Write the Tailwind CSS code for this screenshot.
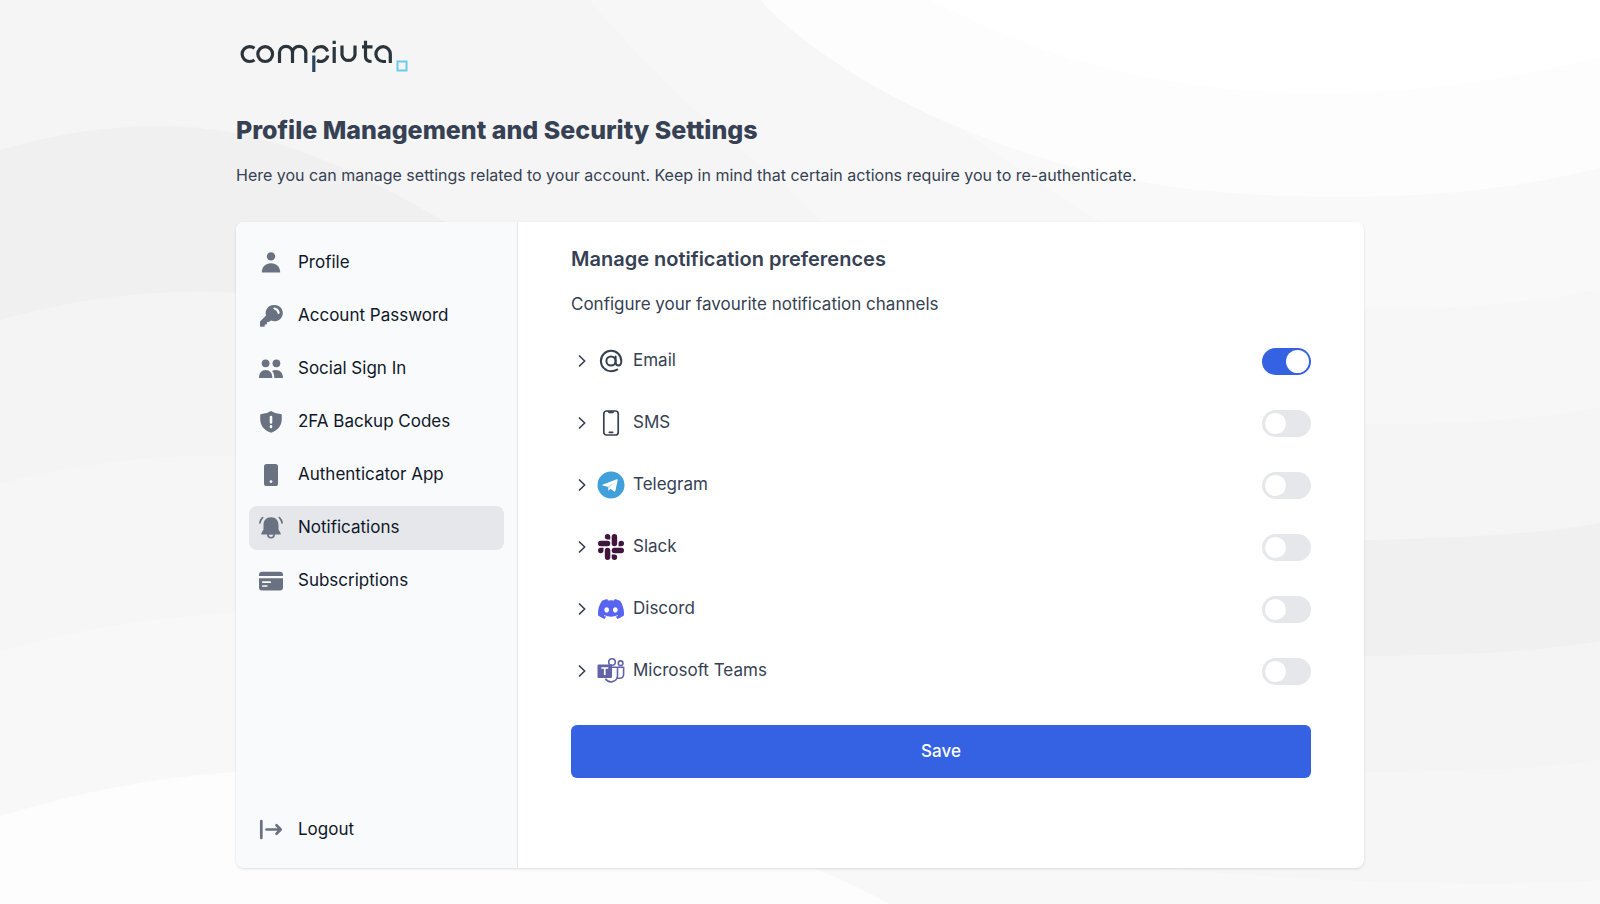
<!DOCTYPE html>
<html lang="en">
<head>
<meta charset="utf-8">
<meta name="viewport" content="width=device-width, initial-scale=1">
<title>Profile Management and Security Settings</title>
<script src="https://cdn.jsdelivr.net/npm/@tailwindcss/browser@4"></script>
</head>
<body class="relative min-h-screen overflow-x-hidden font-['Inter',sans-serif] text-[17px] text-gray-700">
<svg class="absolute inset-0 -z-10 h-full w-full" viewBox="0 0 1600 904" preserveAspectRatio="none" aria-hidden="true">
  <rect width="1600" height="904" fill="#fff"/>
  <path d="M930 0C990 30 1060 60 1140 76C1280 104 1440 98 1600 57V904H0V0Z" fill="#fdfdfd"/>
  <path d="M760 0C800 45 880 95 960 128C1080 178 1180 196 1340 197C1440 197 1520 188 1600 168V904H0V0Z" fill="#f9f9f9"/>
  <path d="M760 0C800 45 880 95 960 128C1060 200 1200 300 1375 308C1460 308 1540 304 1600 288V904H0V0Z" fill="#f7f7f7"/>
  <path d="M590 0C640 60 700 120 780 180C900 320 1200 425 1375 424C1460 424 1540 420 1600 407V904H0V0Z" fill="#f5f5f5"/>
  <path d="M0 150C90 124 170 120 240 134C400 168 560 300 700 400C900 500 1200 544 1375 540C1460 538 1540 534 1600 523V904H0Z" fill="#f0f0f0"/>
  <path d="M0 320C80 297 160 288 240 293C600 330 900 655 1375 656C1460 655 1540 652 1600 641V904H0Z" fill="#f4f4f4"/>
  <path d="M0 484C80 462 160 454 240 456C600 480 900 770 1375 772C1460 771 1540 770 1600 760V904H0Z" fill="#f6f6f6"/>
  <path d="M0 652C80 628 160 616 240 613C500 620 800 830 1000 850C1200 880 1500 890 1600 880V904H0Z" fill="#f8f8f8"/>
  <path d="M0 816C80 792 160 776 240 772C500 780 720 812 890 904H0Z" fill="#fdfdfd"/>
</svg>

<div class="mx-auto flex w-full max-w-[1128px] flex-col">
  <header>
    <a href="#" aria-label="compiuta" class="mt-9 block w-fit">
      <svg class="block h-10 w-44" viewBox="0 0 176 40" fill="none" stroke="#2b343b" stroke-width="3.2" aria-hidden="true">
        <path d="M18.500 12.200Q16.500 10.700 13.500 10.700A7.400 7.400 0 0 0 13.500 25.500Q16.500 25.500 18.500 24"/>
        <circle cx="29.200" cy="18.100" r="7.400"/>
        <path d="M43.500 27V16.500A6.200 5.800 0 0 1 56.500 16.500V27M56.500 16.500A6.200 5.800 0 0 1 69.800 16.500V27"/>
        <path d="M77.800 36V19.500" stroke="#26465f"/>
        <path d="M77.500 16.500A7.300 7.300 0 0 1 91.500 15.500M91.800 19.500A7.300 7.300 0 0 1 81 24.500"/>
        <path d="M98.200 11V27M98.200 4.800V8"/>
        <path d="M106 9.500V19A6.600 6.600 0 0 0 119 19V9.500"/>
        <path d="M129.500 4.800V20.500Q129.500 25.500 135.500 25.500M126 10.800H136.500"/>
        <path d="M154.300 27V18.100A7.200 7.400 0 1 0 147 25.500H150"/>
        <rect x="161.500" y="25.500" width="9" height="9" stroke="#6ccbec" stroke-width="2"/>
      </svg>
    </a>
    <h1 class="mt-9 text-[25px] leading-9 font-extrabold">Profile Management and Security Settings</h1>
    <p class="mt-[13px] text-base leading-7">Here you can manage settings related to your account. Keep in mind that certain actions require you to re-authenticate.</p>
  </header>

  <div class="mt-[33px] mb-8 flex min-h-[646px] overflow-hidden rounded-lg bg-white shadow">
    <nav aria-label="Account settings" class="flex w-[282px] shrink-0 flex-col justify-between border-r border-gray-200 bg-[#f9fafc] px-[13px] pt-[19px] pb-4 text-gray-900">
      <ul class="flex flex-col gap-[9px]">
        <li><a href="#" class="flex h-11 items-center gap-[15px] rounded-lg px-[10px]">
          <svg class="size-6 text-gray-500" viewBox="0 0 24 24" fill="currentColor" aria-hidden="true"><circle cx="12" cy="5.400" r="4.200"/><path d="M2.800 21.500C2.800 15.700 6.500 12.200 12 12.200S21.200 15.700 21.200 21.500Z"/></svg>
          Profile</a></li>
        <li><a href="#" class="flex h-11 items-center gap-[15px] rounded-lg px-[10px]">
          <svg class="size-6 text-gray-500" viewBox="0 0 24 24" aria-hidden="true"><path fill="currentColor" d="M14.800 1A8.100 8.100 0 0 0 7 11.500L1.500 17Q1 17.500 1 18.200V22Q1 22.800 1.800 22.800H5Q5.800 22.800 5.800 22V20.500H7.200Q8 20.500 8 19.700V18H9.600L12.300 16.400A8.100 8.100 0 1 0 14.800 1Z"/><path d="M15.500 4.500Q19 5.200 19.600 8.800" fill="none" stroke="#f9fafc" stroke-width="2.200" stroke-linecap="round"/></svg>
          Account Password</a></li>
        <li><a href="#" class="flex h-11 items-center gap-[15px] rounded-lg px-[10px]">
          <svg class="size-6 text-gray-500" viewBox="0 0 24 24" fill="currentColor" aria-hidden="true"><circle cx="6.600" cy="6.300" r="3.900"/><circle cx="17.400" cy="6.300" r="3.900"/><path d="M0 21C0 16 2.500 13 6.700 13S13.400 16 13.400 21ZM15.300 21C15.300 17.500 14.600 15.500 13 13.900Q14.500 13 17 13C21.300 13 24 16 24 21Z"/></svg>
          Social Sign In</a></li>
        <li><a href="#" class="flex h-11 items-center gap-[15px] rounded-lg px-[10px]">
          <svg class="size-6 text-gray-500" viewBox="0 0 24 24" aria-hidden="true"><path fill="currentColor" d="M12 1Q16.500 4 21.500 4Q22.800 4 22.800 5.200V9C22.800 15.500 19 20.300 12 22.800C5 20.300 1.200 15.500 1.200 9V5.200Q1.200 4 2.500 4Q7.500 4 12 1Z"/><path d="M12 7V12.500M12 16.200V16.900" stroke="#f9fafc" stroke-width="2.600" stroke-linecap="round"/></svg>
          2FA Backup Codes</a></li>
        <li><a href="#" class="flex h-11 items-center gap-[15px] rounded-lg px-[10px]">
          <svg class="size-6 text-gray-500" viewBox="0 0 24 24" aria-hidden="true"><rect x="5" y="1" width="14" height="22" rx="2.600" fill="currentColor"/><circle cx="12" cy="18.600" r="1.400" fill="#f9fafc"/></svg>
          Authenticator App</a></li>
        <li><a href="#" aria-current="page" class="flex h-11 items-center gap-[15px] rounded-lg bg-gray-200 px-[10px]">
          <svg class="size-6 text-gray-500" viewBox="0 0 24 24" aria-hidden="true"><path fill="currentColor" d="M12 1.300C16.800 1.300 19.500 4.600 19.500 9V13.500L21.700 17.300Q22.200 18.600 21 18.600H16A4 4 0 0 1 8 18.600H3Q1.800 18.600 2.300 17.300L4.500 13.500V9C4.500 4.600 7.200 1.300 12 1.300Z"/><path d="M9.700 18.800H14.300Q13.800 21 12 21T9.700 18.800Z" fill="#e5e7eb"/><path d="M3.600 1.600Q1.400 3.600 .900 7M20.400 1.600Q22.600 3.600 23.100 7" fill="none" stroke="currentColor" stroke-width="1.700" stroke-linecap="round"/></svg>
          Notifications</a></li>
        <li><a href="#" class="flex h-11 items-center gap-[15px] rounded-lg px-[10px]">
          <svg class="size-6 text-gray-500" viewBox="0 0 24 24" aria-hidden="true"><path fill="currentColor" d="M3 2.800H21Q24 2.800 24 5.800V7H0V5.800Q0 2.800 3 2.800ZM0 9.300H24V18.600Q24 21.600 21 21.600H3Q0 21.600 0 18.600Z"/><path d="M3.800 13.200H11.200M3.800 17H7.800" stroke="#f9fafc" stroke-width="1.700" stroke-linecap="round"/></svg>
          Subscriptions</a></li>
      </ul>
      <a href="#" class="flex h-11 items-center gap-[15px] rounded-lg px-[10px]">
        <svg class="size-6 text-gray-500" viewBox="0 0 24 24" fill="none" stroke="currentColor" stroke-width="2.700" stroke-linecap="round" stroke-linejoin="round" aria-hidden="true"><path d="M2.300 3V20M7.500 11.500H21.500M17.500 7.300L21.700 11.500L17.500 15.700"/></svg>
        Logout</a>
    </nav>

    <main class="min-w-0 flex-1 px-[53px] pt-[21px] pb-12">
      <h2 class="text-xl leading-8 font-semibold">Manage notification preferences</h2>
      <p class="mt-[15px] leading-7">Configure your favourite notification channels</p>
      <form class="mt-3">
        <ul>
          <li class="flex h-[62px] items-center justify-between">
            <button type="button" aria-expanded="false" class="flex items-center">
              <svg class="ml-[3px] size-4" viewBox="0 0 16 16" fill="none" stroke="#374151" stroke-width="1.700" stroke-linecap="round" stroke-linejoin="round" aria-hidden="true"><path d="M5.500 3L10.700 8L5.500 13"/></svg>
              <svg class="ml-[7px] size-7" viewBox="0 0 28 28" fill="none" stroke="#374151" stroke-width="2" stroke-linecap="round" aria-hidden="true"><circle cx="14" cy="14" r="4.600"/><path d="M18.600 9.400V15.500Q18.800 18.600 21.500 18.600Q24.300 18.400 24.300 14A10.200 10.200 0 1 0 14 24.200Q17.500 24.200 20.200 22.600"/></svg>
              <span class="ml-2" id="email">Email</span>
            </button>
            <input type="checkbox" checked aria-labelledby="email" class="relative h-[27px] w-[49px] appearance-none rounded-full bg-gray-200 before:absolute before:top-[3px] before:left-[3px] before:size-[21px] before:rounded-full before:bg-white checked:bg-[#3562e3] checked:before:top-[2px] checked:before:left-[24px] checked:before:size-[23px]">
          </li>
          <li class="flex h-[62px] items-center justify-between">
            <button type="button" aria-expanded="false" class="flex items-center">
              <svg class="ml-[3px] size-4" viewBox="0 0 16 16" fill="none" stroke="#374151" stroke-width="1.700" stroke-linecap="round" stroke-linejoin="round" aria-hidden="true"><path d="M5.500 3L10.700 8L5.500 13"/></svg>
              <svg class="ml-[7px] size-7" viewBox="0 0 28 28" fill="none" stroke="#374151" stroke-width="1.700" stroke-linecap="round" stroke-linejoin="round" aria-hidden="true"><rect x="6.800" y="2" width="14.400" height="24" rx="2.800"/><path d="M12.300 23.300H15.700"/><path d="M11 2.400H17Q16.800 4 15.500 4H12.500Q11.200 4 11 2.400Z" fill="#374151" stroke-width=".6"/></svg>
              <span class="ml-2" id="sms">SMS</span>
            </button>
            <input type="checkbox" aria-labelledby="sms" class="relative h-[27px] w-[49px] appearance-none rounded-full bg-gray-200 before:absolute before:top-[3px] before:left-[3px] before:size-[21px] before:rounded-full before:bg-white checked:bg-[#3562e3] checked:before:top-[2px] checked:before:left-[24px] checked:before:size-[23px]">
          </li>
          <li class="flex h-[62px] items-center justify-between">
            <button type="button" aria-expanded="false" class="flex items-center">
              <svg class="ml-[3px] size-4" viewBox="0 0 16 16" fill="none" stroke="#374151" stroke-width="1.700" stroke-linecap="round" stroke-linejoin="round" aria-hidden="true"><path d="M5.500 3L10.700 8L5.500 13"/></svg>
              <svg class="ml-[7px] size-7" viewBox="0 0 28 28" aria-hidden="true"><circle cx="14" cy="14" r="13.500" fill="#419fd9"/><path fill="#fff" d="M5.500 13.700L19.700 8.200Q20.900 7.900 20.600 9.400L18.400 19.800Q18 21 16.900 20.300L13.400 17.700L11.600 19.400Q11.200 19.700 11.100 19L10.900 15.700L5.500 14.400Q5 14 5.500 13.700Z"/><path fill="#b8d8ee" d="M10.900 15.700L17.300 11.300L12.600 16.300L11.300 19.400Z"/></svg>
              <span class="ml-2" id="telegram">Telegram</span>
            </button>
            <input type="checkbox" aria-labelledby="telegram" class="relative h-[27px] w-[49px] appearance-none rounded-full bg-gray-200 before:absolute before:top-[3px] before:left-[3px] before:size-[21px] before:rounded-full before:bg-white checked:bg-[#3562e3] checked:before:top-[2px] checked:before:left-[24px] checked:before:size-[23px]">
          </li>
          <li class="flex h-[62px] items-center justify-between">
            <button type="button" aria-expanded="false" class="flex items-center">
              <svg class="ml-[3px] size-4" viewBox="0 0 16 16" fill="none" stroke="#374151" stroke-width="1.700" stroke-linecap="round" stroke-linejoin="round" aria-hidden="true"><path d="M5.500 3L10.700 8L5.500 13"/></svg>
              <svg class="ml-[7px] size-7 p-px" viewBox="0 0 24 24" fill="#42153f" aria-hidden="true"><path d="M5.042 15.165a2.528 2.528 0 0 1-2.520 2.523A2.528 2.528 0 0 1 0 15.165a2.527 2.527 0 0 1 2.522-2.520h2.520v2.520zM6.313 15.165a2.527 2.527 0 0 1 2.521-2.520 2.527 2.527 0 0 1 2.521 2.520v6.313A2.528 2.528 0 0 1 8.834 24a2.528 2.528 0 0 1-2.521-2.522v-6.313zM8.834 5.042a2.528 2.528 0 0 1-2.521-2.520A2.528 2.528 0 0 1 8.834 0a2.528 2.528 0 0 1 2.521 2.522v2.520H8.834zM8.834 6.313a2.528 2.528 0 0 1 2.521 2.521 2.528 2.528 0 0 1-2.521 2.521H2.522A2.528 2.528 0 0 1 0 8.834a2.528 2.528 0 0 1 2.522-2.521h6.312zM18.956 8.834a2.528 2.528 0 0 1 2.522-2.521A2.528 2.528 0 0 1 24 8.834a2.528 2.528 0 0 1-2.522 2.521h-2.522V8.834zM17.688 8.834a2.528 2.528 0 0 1-2.523 2.521 2.527 2.527 0 0 1-2.520-2.521V2.522A2.527 2.527 0 0 1 15.165 0a2.528 2.528 0 0 1 2.523 2.522v6.312zM15.165 18.956a2.528 2.528 0 0 1 2.523 2.522A2.528 2.528 0 0 1 15.165 24a2.527 2.527 0 0 1-2.520-2.522v-2.522h2.520zM15.165 17.688a2.527 2.527 0 0 1-2.520-2.523 2.526 2.526 0 0 1 2.520-2.520h6.313A2.527 2.527 0 0 1 24 15.165a2.528 2.528 0 0 1-2.522 2.523h-6.313z"/></svg>
              <span class="ml-2" id="slack">Slack</span>
            </button>
            <input type="checkbox" aria-labelledby="slack" class="relative h-[27px] w-[49px] appearance-none rounded-full bg-gray-200 before:absolute before:top-[3px] before:left-[3px] before:size-[21px] before:rounded-full before:bg-white checked:bg-[#3562e3] checked:before:top-[2px] checked:before:left-[24px] checked:before:size-[23px]">
          </li>
          <li class="flex h-[62px] items-center justify-between">
            <button type="button" aria-expanded="false" class="flex items-center">
              <svg class="ml-[3px] size-4" viewBox="0 0 16 16" fill="none" stroke="#374151" stroke-width="1.700" stroke-linecap="round" stroke-linejoin="round" aria-hidden="true"><path d="M5.500 3L10.700 8L5.500 13"/></svg>
              <svg class="ml-[7px] size-7 p-px" viewBox="0 0 24 24" fill="#5865f2" aria-hidden="true"><path d="M20.317 4.370a19.791 19.791 0 0 0-4.885-1.515.074.074 0 0 0-.079.037c-.210.375-.444.865-.608 1.250a18.270 18.270 0 0 0-5.487 0 12.640 12.640 0 0 0-.617-1.250.077.077 0 0 0-.079-.037A19.736 19.736 0 0 0 3.677 4.370a.070.070 0 0 0-.032.028C.533 9.046-.319 13.580.099 18.058a.082.082 0 0 0 .031.056 19.900 19.900 0 0 0 5.993 3.030.078.078 0 0 0 .084-.028c.462-.630.873-1.295 1.226-1.994a.076.076 0 0 0-.042-.106 13.100 13.100 0 0 1-1.872-.892.077.077 0 0 1-.008-.128c.126-.094.252-.192.372-.291a.074.074 0 0 1 .078-.011c3.927 1.793 8.180 1.793 12.061 0a.074.074 0 0 1 .079.010c.120.099.246.198.373.292a.077.077 0 0 1-.007.128 12.300 12.300 0 0 1-1.873.891.077.077 0 0 0-.041.107c.360.698.772 1.363 1.225 1.993a.076.076 0 0 0 .084.029 19.840 19.840 0 0 0 6.002-3.030.077.077 0 0 0 .031-.055c.500-5.177-.838-9.674-3.548-13.660a.061.061 0 0 0-.031-.029zM8.020 15.331c-1.182 0-2.157-1.086-2.157-2.419s.956-2.419 2.157-2.419c1.210 0 2.176 1.095 2.157 2.419 0 1.333-.956 2.419-2.157 2.419zm7.975 0c-1.183 0-2.157-1.086-2.157-2.419s.955-2.419 2.157-2.419c1.210 0 2.176 1.095 2.157 2.419 0 1.333-.946 2.419-2.157 2.419z"/></svg>
              <span class="ml-2" id="discord">Discord</span>
            </button>
            <input type="checkbox" aria-labelledby="discord" class="relative h-[27px] w-[49px] appearance-none rounded-full bg-gray-200 before:absolute before:top-[3px] before:left-[3px] before:size-[21px] before:rounded-full before:bg-white checked:bg-[#3562e3] checked:before:top-[2px] checked:before:left-[24px] checked:before:size-[23px]">
          </li>
          <li class="flex h-[62px] items-center justify-between">
            <button type="button" aria-expanded="false" class="flex items-center">
              <svg class="ml-[3px] size-4" viewBox="0 0 16 16" fill="none" stroke="#374151" stroke-width="1.700" stroke-linecap="round" stroke-linejoin="round" aria-hidden="true"><path d="M5.500 3L10.700 8L5.500 13"/></svg>
              <svg class="ml-[7px] size-7" viewBox="0 0 28 28" fill="none" stroke="#6264a7" stroke-width="1.600" aria-hidden="true"><circle cx="15" cy="5" r="3.300"/><circle cx="23.600" cy="6.200" r="2.300"/><path d="M15 10.300H20.500V19A6.600 6.600 0 0 1 8.400 21.800M20.500 10.300H26.600V17Q26.600 21.300 22.500 21.300H20"/><path d="M1.500 7.500H14Q15 7.500 15 8.500V20Q15 21 14 21H1.500Q.500 21 .500 20V8.500Q.500 7.500 1.500 7.500Z" fill="#6264a7" stroke="none"/><path d="M4.300 11H11.200M7.750 11V18" stroke="#fff" stroke-width="1.700"/></svg>
              <span class="ml-2" id="teams">Microsoft Teams</span>
            </button>
            <input type="checkbox" aria-labelledby="teams" class="relative h-[27px] w-[49px] appearance-none rounded-full bg-gray-200 before:absolute before:top-[3px] before:left-[3px] before:size-[21px] before:rounded-full before:bg-white checked:bg-[#3562e3] checked:before:top-[2px] checked:before:left-[24px] checked:before:size-[23px]">
          </li>
        </ul>
        <button type="submit" class="mt-[23px] h-[53px] w-full rounded-md bg-[#3562e3] font-medium text-white">Save</button>
      </form>
    </main>
  </div>
</div>
</body>
</html>
